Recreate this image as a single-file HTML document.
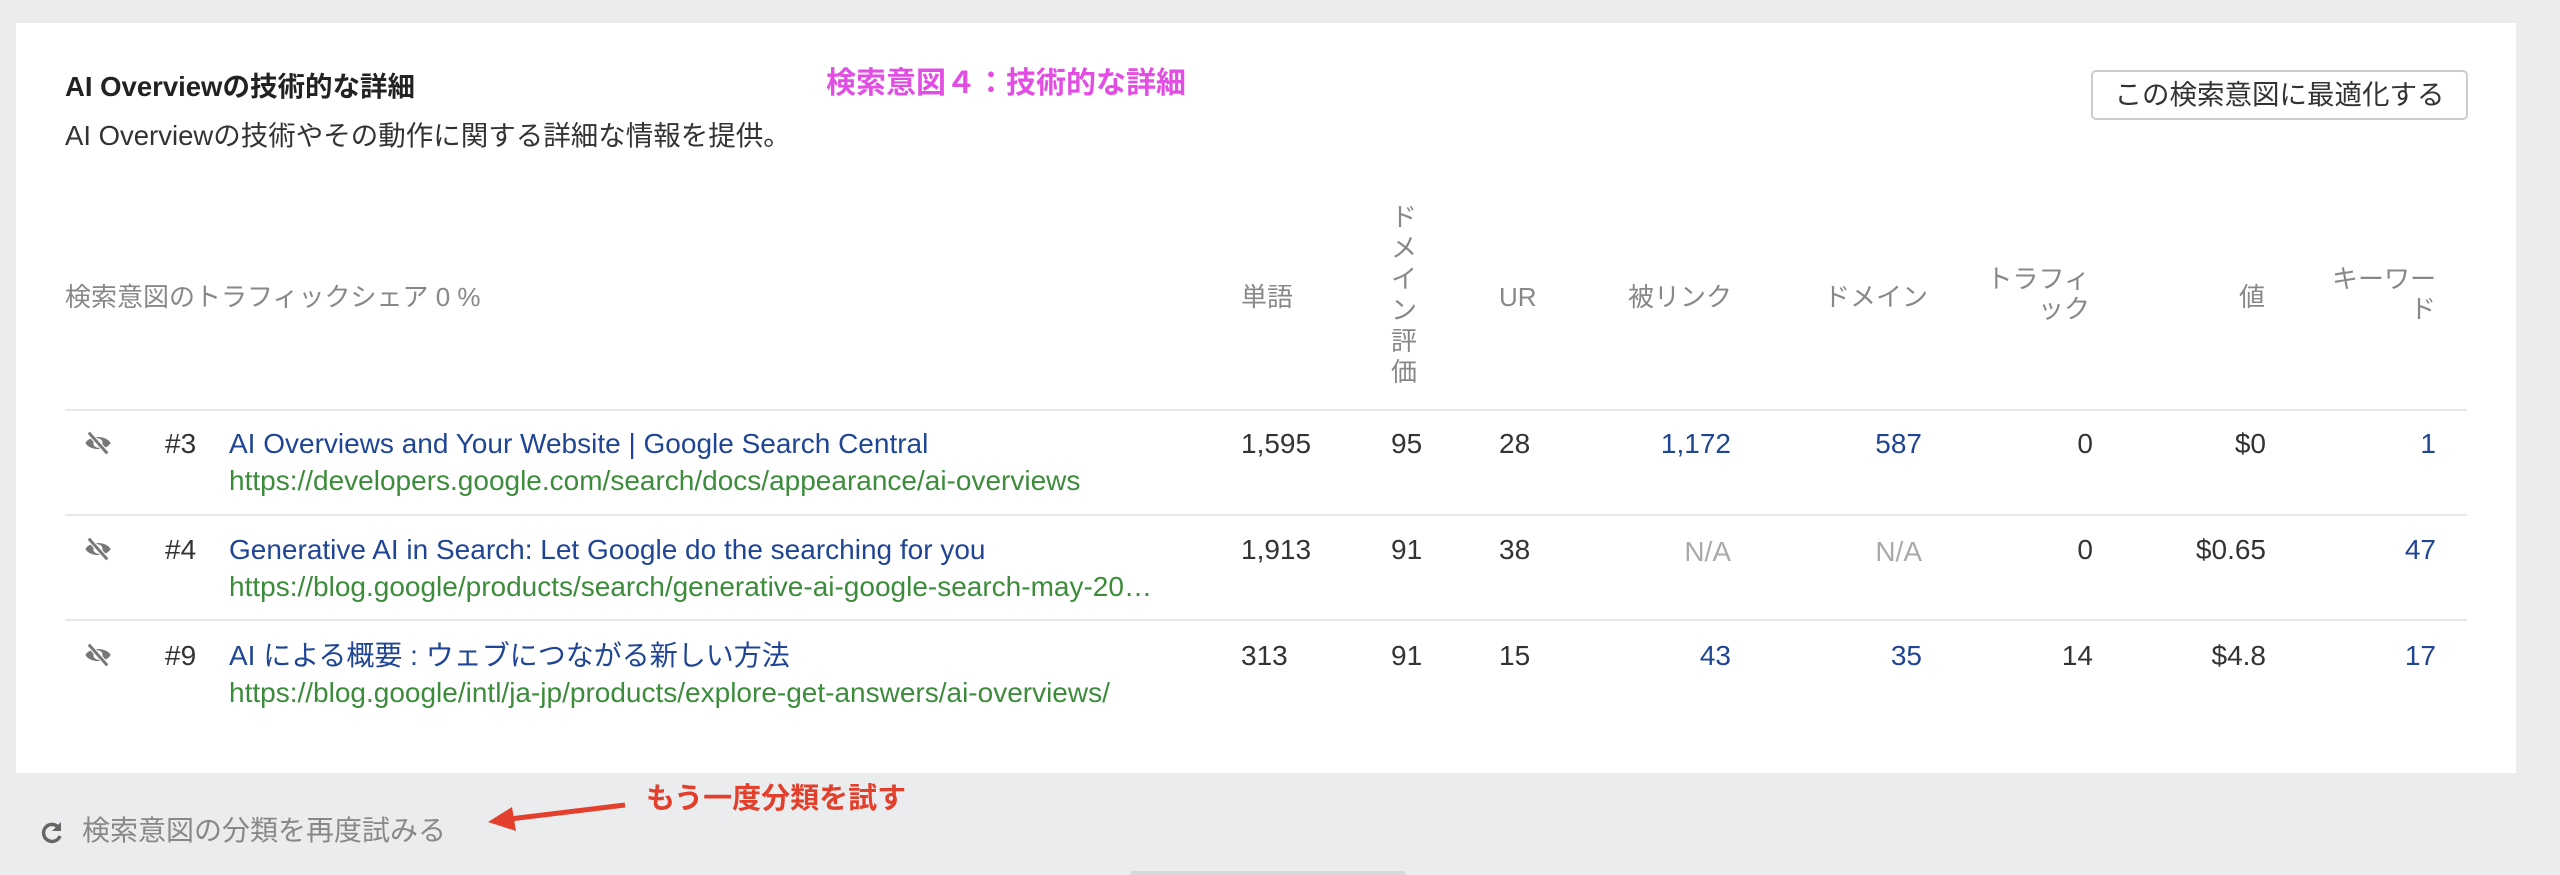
<!DOCTYPE html>
<html><head><meta charset="utf-8"><style>
*{margin:0;padding:0;box-sizing:border-box}
body{width:2560px;height:875px;background:#ebecee;position:relative;overflow:hidden;font-family:"Liberation Sans","Noto Sans CJK JP",sans-serif;color:#333}
.a{position:absolute;white-space:nowrap;line-height:36px;font-size:28px}
.card{position:absolute;left:16px;top:23px;width:2500px;height:750px;background:#fff}
.h{color:#888;font-size:26px}
.r{text-align:right}
.link{color:#1f4594}
.url{color:#3c8c3c}
.line{position:absolute;left:65px;width:2402px;height:2px;background:#e8e8e8}
.na{color:#aaa}
</style></head><body>
<div class="card"></div>
<div class="a" style="left:65px;top:69px;font-weight:bold;font-size:27.5px;color:#222">AI Overviewの技術的な詳細</div>
<div class="a" style="left:826px;top:66px;font-weight:bold;font-size:30px;color:#e24ee4">検索意図４：技術的な詳細</div>
<div class="a" style="left:65px;top:118px;font-size:27.5px;color:#333">AI Overviewの技術やその動作に関する詳細な情報を提供。</div>
<div class="a" style="left:2091px;top:70px;width:377px;height:50px;border:2px solid #ccc;border-radius:5px;text-align:center;line-height:45px;font-size:27.5px;color:#333">この検索意図に最適化する</div>

<div class="a h" style="left:65px;top:279px">検索意図のトラフィックシェア 0 %</div>
<div class="a h" style="left:1241px;top:279px">単語</div>
<div class="a h" style="left:1390px;top:202px;width:28px;line-height:31px;white-space:normal;text-align:center">ド メ イ ン 評 価</div>
<div class="a h" style="left:1499px;top:279px">UR</div>
<div class="a h" style="left:1628px;top:279px">被リンク</div>
<div class="a h" style="left:1824px;top:279px">ドメイン</div>
<div class="a h r" style="right:470px;top:264px;line-height:30px">トラフィ<br>ック</div>
<div class="a h r" style="right:295px;top:279px">値</div>
<div class="a h r" style="right:124px;top:264px;line-height:30px">キーワー<br>ド</div>

<div class="line" style="top:409px"></div>
<div class="line" style="top:514px"></div>
<div class="line" style="top:619px"></div>

<svg style="position:absolute;left:83px;top:429px" width="30" height="28" viewBox="0 0 26 24"><path d="M2 12 C6 5 20 5 24 12 C20 19 6 19 2 12Z" fill="#777"/><circle cx="13" cy="12" r="4" fill="#fff"/><path d="M5 3 L21 21" stroke="#fff" stroke-width="4.5"/><path d="M5 3 L21 21" stroke="#777" stroke-width="2.5"/></svg>
<svg style="position:absolute;left:83px;top:535px" width="30" height="28" viewBox="0 0 26 24"><path d="M2 12 C6 5 20 5 24 12 C20 19 6 19 2 12Z" fill="#777"/><circle cx="13" cy="12" r="4" fill="#fff"/><path d="M5 3 L21 21" stroke="#fff" stroke-width="4.5"/><path d="M5 3 L21 21" stroke="#777" stroke-width="2.5"/></svg>
<svg style="position:absolute;left:83px;top:641px" width="30" height="28" viewBox="0 0 26 24"><path d="M2 12 C6 5 20 5 24 12 C20 19 6 19 2 12Z" fill="#777"/><circle cx="13" cy="12" r="4" fill="#fff"/><path d="M5 3 L21 21" stroke="#fff" stroke-width="4.5"/><path d="M5 3 L21 21" stroke="#777" stroke-width="2.5"/></svg>

<div class="a" style="left:165px;top:426px">#3</div>
<div class="a link" style="left:229px;top:426px">AI Overviews and Your Website | Google Search Central</div>
<div class="a url" style="left:229px;top:463px">https://developers.google.com/search/docs/appearance/ai-overviews</div>
<div class="a" style="left:1241px;top:426px">1,595</div>
<div class="a" style="left:1391px;top:426px">95</div>
<div class="a" style="left:1499px;top:426px">28</div>
<div class="a r link" style="right:829px;top:426px">1,172</div>
<div class="a r link" style="right:638px;top:426px">587</div>
<div class="a r" style="right:467px;top:426px">0</div>
<div class="a r" style="right:294px;top:426px">$0</div>
<div class="a r link" style="right:124px;top:426px">1</div>

<div class="a" style="left:165px;top:532px">#4</div>
<div class="a link" style="left:229px;top:532px">Generative AI in Search: Let Google do the searching for you</div>
<div class="a url" style="left:229px;top:569px">https://blog.google/products/search/generative-ai-google-search-may-20…</div>
<div class="a" style="left:1241px;top:532px">1,913</div>
<div class="a" style="left:1391px;top:532px">91</div>
<div class="a" style="left:1499px;top:532px">38</div>
<div class="a r na" style="right:829px;top:534px">N/A</div>
<div class="a r na" style="right:638px;top:534px">N/A</div>
<div class="a r" style="right:467px;top:532px">0</div>
<div class="a r" style="right:294px;top:532px">$0.65</div>
<div class="a r link" style="right:124px;top:532px">47</div>

<div class="a" style="left:165px;top:638px">#9</div>
<div class="a link" style="left:229px;top:638px">AI による概要 : ウェブにつながる新しい方法</div>
<div class="a url" style="left:229px;top:675px">https://blog.google/intl/ja-jp/products/explore-get-answers/ai-overviews/</div>
<div class="a" style="left:1241px;top:638px">313</div>
<div class="a" style="left:1391px;top:638px">91</div>
<div class="a" style="left:1499px;top:638px">15</div>
<div class="a r link" style="right:829px;top:638px">43</div>
<div class="a r link" style="right:638px;top:638px">35</div>
<div class="a r" style="right:467px;top:638px">14</div>
<div class="a r" style="right:294px;top:638px">$4.8</div>
<div class="a r link" style="right:124px;top:638px">17</div>

<svg style="position:absolute;left:40px;top:820px" width="24" height="26" viewBox="0 0 24 26"><path d="M19 8 A8.5 8.5 0 1 0 20 16" fill="none" stroke="#666" stroke-width="3.5"/><path d="M21 2 L21 11 L12 11Z" fill="#666"/></svg>
<div class="a h" style="left:82px;top:813px;font-size:28px">検索意図の分類を再度試みる</div>
<svg style="position:absolute;left:480px;top:795px" width="150" height="40" viewBox="0 0 150 40"><path d="M145 10 L30 24" stroke="#e2402c" stroke-width="5"/><path d="M8 27 L32 12 L36 36Z" fill="#e2402c"/></svg>
<div class="a" style="left:646px;top:781px;font-weight:bold;font-size:29px;color:#e2402c">もう一度分類を試す</div>
<div style="position:absolute;left:1130px;top:871px;width:275px;height:4px;background:#d8d8d8"></div>
</body></html>
